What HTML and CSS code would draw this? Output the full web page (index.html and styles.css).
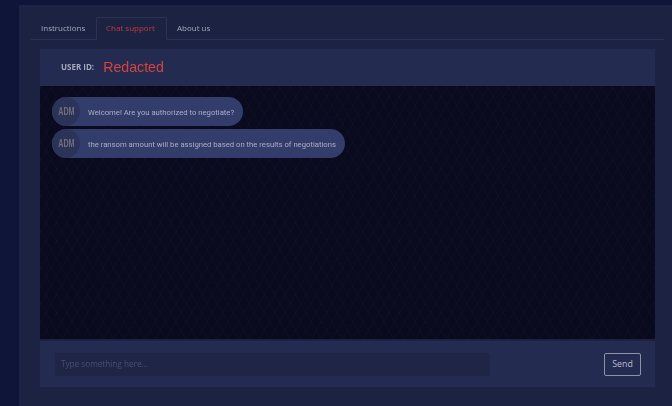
FILE: index.html
```html
<!DOCTYPE html>
<html lang="en">
<head>
<meta charset="utf-8">
<title>Chat support</title>
<link rel="stylesheet" href="styles.css">
</head>
<body>
<div class="panel">
  <nav class="tabs">
    <a class="tab">Instructions</a>
    <a class="tab active">Chat support</a>
    <a class="tab">About us</a>
  </nav>
  <section class="chat">
    <header class="user">
      <span class="user-label">USER ID:</span>
      <span class="user-id">Redacted</span>
    </header>
    <div class="messages">
      <div class="bubble"><span class="avatar"><span class="avatar-text">ADM</span></span><span class="text">Welcome! Are you authorized to negotiate?</span></div>
      <div class="bubble"><span class="avatar"><span class="avatar-text">ADM</span></span><span class="text">the ransom amount will be assigned based on the results of negotiations</span></div>
    </div>
    <footer class="composer">
      <div class="field">Type something here...</div>
      <button class="send">Send</button>
    </footer>
  </section>
</div>
</body>
</html>
```
FILE: styles.css
```css
* { box-sizing: border-box; }
html, body { margin: 0; height: 100%; }
body {
  width: 672px;
  height: 406px;
  overflow: hidden;
  background: #0f1539;
  padding: 5px 0 0 19px;
  font-family: "Open Sans", "Liberation Sans", sans-serif;
}
.panel {
  height: 401px;
  background: #1c2342;
  padding: 12px 8px 0 12px;
}
.tabs {
  display: flex;
  height: 23px;
  border-bottom: 1px solid #293355;
}
.tab {
  display: flex;
  align-items: center;
  padding: 0 10px 2px;
  height: 23px;
  font-size: 8px;
  font-weight: 500;
  color: #a4a9bd;
  filter: blur(0.35px);
}
.tab:first-child { width: 65px; }
.tab.active {
  color: #c23a36;
  border: 1px solid #293355;
  border-bottom-color: #1c2342;
  border-radius: 2px 2px 0 0;
  padding: 0 9px 3px;
  width: 71px;
}
.chat {
  margin: 9px 9px 0 9px;
  width: 615px;
  display: flex;
  flex-direction: column;
}
.user {
  height: 37px;
  background: #232b50;
  display: flex;
  align-items: center;
  padding: 0 0 2px 21px;
  gap: 9px;
}
.user-label {
  font-size: 8px;
  font-weight: 700;
  color: #a4a9bd;
  filter: blur(0.35px);
}
.user-id {
  font-family: "Liberation Sans", sans-serif;
  font-size: 14.2px;
  color: #d8433d;
  filter: blur(0.35px);
}
.messages {
  height: 253px;
  padding: 11px 12px;
  display: flex;
  flex-direction: column;
  align-items: flex-start;
  gap: 3px;
  background-color: #090a1e;
  background-image:
    repeating-linear-gradient(60deg, rgba(40,44,80,.1) 0 1px, transparent 1px 9px),
    repeating-linear-gradient(-60deg, rgba(40,44,80,.1) 0 1px, transparent 1px 9px);
}
.bubble {
  display: flex;
  align-items: center;
  height: 29px;
  background: #333d6c;
  border-radius: 15px;
  padding-right: 9px;
}
.avatar {
  width: 28px;
  height: 29px;
  border-radius: 50%;
  background: #2b3359;
  display: flex;
  align-items: center;
  justify-content: center;
}
.avatar-text {
  font-family: "Liberation Sans", sans-serif;
  font-size: 10px;
  font-weight: 700;
  color: #6f6e79;
  transform: scaleX(0.72);
  filter: blur(0.35px);
}
.text {
  margin-left: 8px;
  padding-top: 1px;
  font-family: "Roboto", sans-serif;
  font-size: 7.7px;
  color: #aaaec0;
  filter: blur(0.3px);
}
.composer {
  margin-top: 2px;
  height: 46px;
  background: #232b50;
  display: flex;
  align-items: center;
  justify-content: space-between;
  padding: 0 14px 0 15px;
}
.field {
  width: 435px;
  height: 23px;
  background: #1e2545;
  display: flex;
  align-items: center;
  padding: 0 0 2px 6px;
  font-size: 8.2px;
  color: #484f70;
  filter: blur(0.35px);
}
.send {
  width: 37px;
  height: 23px;
  padding: 0;
  background: transparent;
  border: 1px solid #8d92a9;
  border-radius: 2px;
  font-family: "Open Sans", "Liberation Sans", sans-serif;
  font-size: 8.8px;
  font-weight: 500;
  color: #b9bccb;
}
```
